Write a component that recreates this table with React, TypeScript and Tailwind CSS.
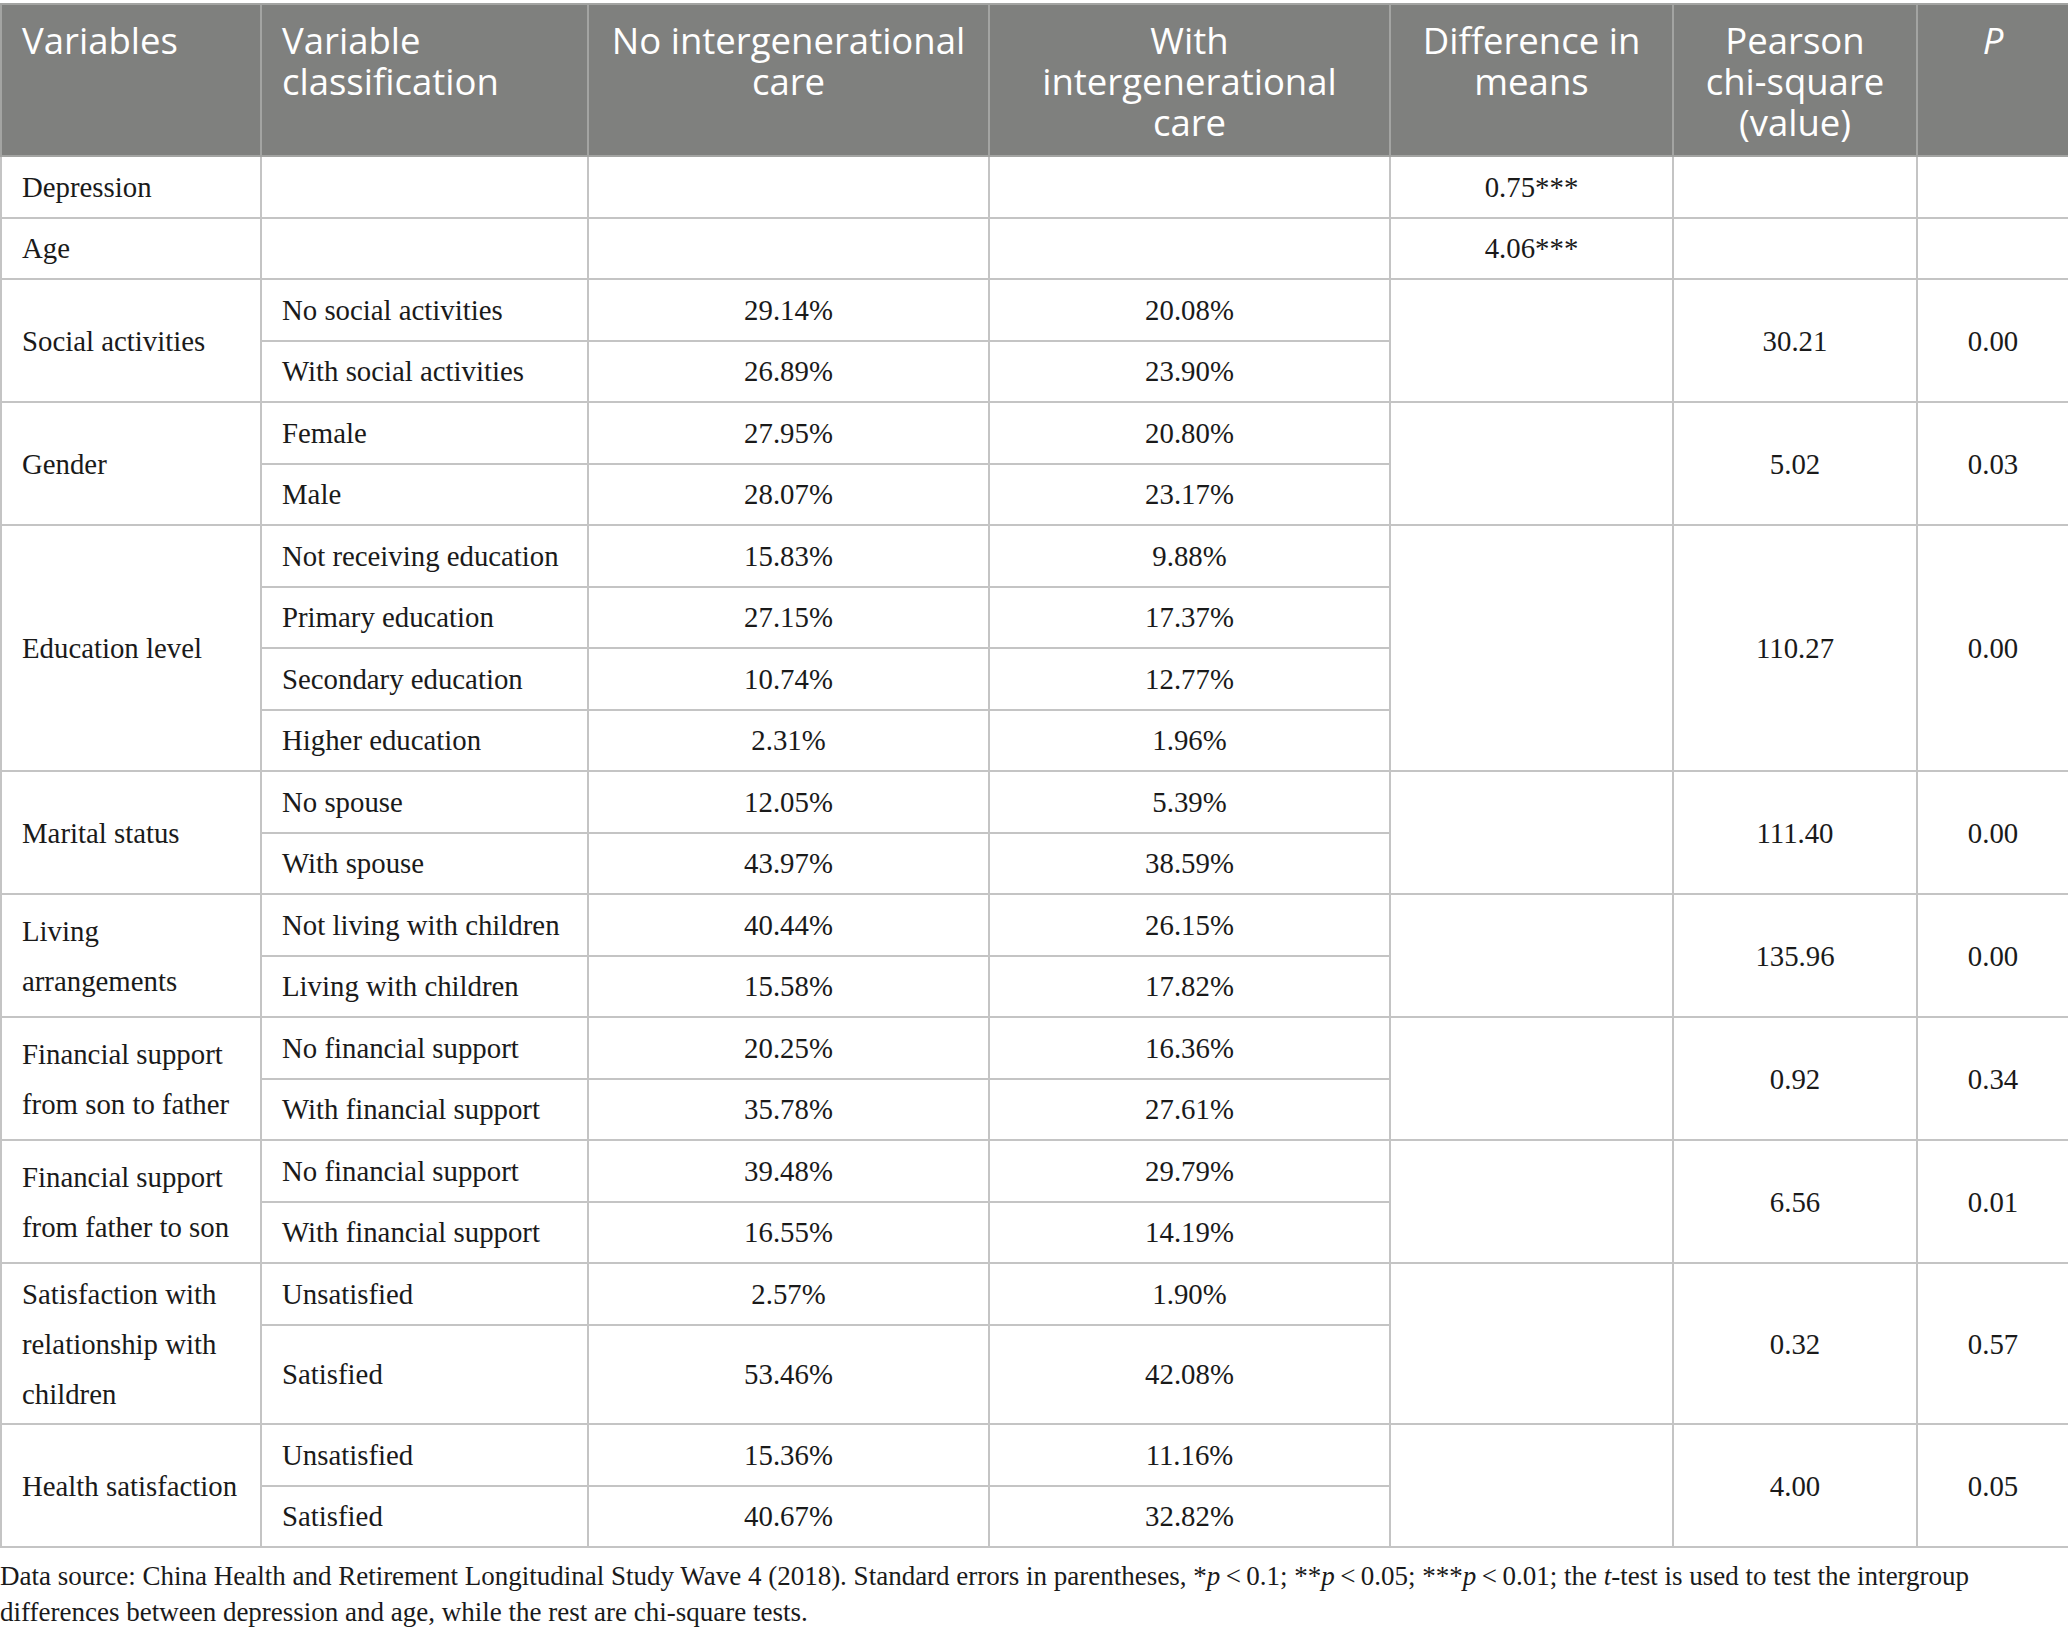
import React from "react";

type Sub = { label: string; a: string; b: string; h?: string };
type Group = { name: React.ReactNode; subs: Sub[]; chi: string; p: string };

const serif = { fontFamily: '"Liberation Serif", "Times New Roman", serif' };

const groups: Group[] = [
  {
    name: "Social activities",
    subs: [
      { label: "No social activities", a: "29.14%", b: "20.08%" },
      { label: "With social activities", a: "26.89%", b: "23.90%" },
    ],
    chi: "30.21",
    p: "0.00",
  },
  {
    name: "Gender",
    subs: [
      { label: "Female", a: "27.95%", b: "20.80%" },
      { label: "Male", a: "28.07%", b: "23.17%" },
    ],
    chi: "5.02",
    p: "0.03",
  },
  {
    name: "Education level",
    subs: [
      { label: "Not receiving education", a: "15.83%", b: "9.88%" },
      { label: "Primary education", a: "27.15%", b: "17.37%" },
      { label: "Secondary education", a: "10.74%", b: "12.77%" },
      { label: "Higher education", a: "2.31%", b: "1.96%" },
    ],
    chi: "110.27",
    p: "0.00",
  },
  {
    name: "Marital status",
    subs: [
      { label: "No spouse", a: "12.05%", b: "5.39%" },
      { label: "With spouse", a: "43.97%", b: "38.59%" },
    ],
    chi: "111.40",
    p: "0.00",
  },
  {
    name: (
      <>
        Living
        <br />
        arrangements
      </>
    ),
    subs: [
      { label: "Not living with children", a: "40.44%", b: "26.15%" },
      { label: "Living with children", a: "15.58%", b: "17.82%" },
    ],
    chi: "135.96",
    p: "0.00",
  },
  {
    name: (
      <>
        Financial support
        <br />
        from son to father
      </>
    ),
    subs: [
      { label: "No financial support", a: "20.25%", b: "16.36%" },
      { label: "With financial support", a: "35.78%", b: "27.61%" },
    ],
    chi: "0.92",
    p: "0.34",
  },
  {
    name: (
      <>
        Financial support
        <br />
        from father to son
      </>
    ),
    subs: [
      { label: "No financial support", a: "39.48%", b: "29.79%" },
      { label: "With financial support", a: "16.55%", b: "14.19%" },
    ],
    chi: "6.56",
    p: "0.01",
  },
  {
    name: (
      <>
        Satisfaction with
        <br />
        relationship with
        <br />
        children
      </>
    ),
    subs: [
      { label: "Unsatisfied", a: "2.57%", b: "1.90%", h: "h-[61.5px]" },
      { label: "Satisfied", a: "53.46%", b: "42.08%", h: "h-[99.5px]" },
    ],
    chi: "0.32",
    p: "0.57",
  },
  {
    name: "Health satisfaction",
    subs: [
      { label: "Unsatisfied", a: "15.36%", b: "11.16%" },
      { label: "Satisfied", a: "40.67%", b: "32.82%" },
    ],
    chi: "4.00",
    p: "0.05",
  },
];

const td = "border-2 border-[#c4c4c4] px-[20px] py-[3px] align-middle";
const th =
  "border-2 border-[#a3a4a2] bg-[#7f807e] px-[20px] pt-[15px] pb-[12px] align-top font-normal text-white";

export default function App() {
  return (
    <div className="w-[2068px] bg-white pt-[3px]">
      <table
        className="w-[2068px] table-fixed border-collapse text-[28.8px] leading-[50px] text-[#1a1a1a]"
        style={serif}
      >
        <colgroup>
          <col className="w-[260px]" />
          <col className="w-[327px]" />
          <col className="w-[401px]" />
          <col className="w-[401px]" />
          <col className="w-[283px]" />
          <col className="w-[244px]" />
          <col className="w-[152px]" />
        </colgroup>
        <thead>
          <tr
            className="text-[36.5px] leading-[41px]"
            style={{ fontFamily: '"Open Sans", "Noto Sans", sans-serif' }}
          >
            <th className={`${th} text-left`}>Variables</th>
            <th className={`${th} text-left`}>
              Variable
              <br />
              classification
            </th>
            <th className={`${th} text-center`}>
              No intergenerational
              <br />
              care
            </th>
            <th className={`${th} text-center`}>
              With
              <br />
              intergenerational
              <br />
              care
            </th>
            <th className={`${th} text-center`}>
              Difference in
              <br />
              means
            </th>
            <th className={`${th} text-center`}>
              Pearson
              <br />
              chi-square
              <br />
              (value)
            </th>
            <th className={`${th} text-center`}>
              <i>P</i>
            </th>
          </tr>
        </thead>
        <tbody>
          <tr className="h-[61.5px]">
            <td className={td}>Depression</td>
            <td className={td}></td>
            <td className={td}></td>
            <td className={td}></td>
            <td className={`${td} text-center`}>0.75***</td>
            <td className={td}></td>
            <td className={td}></td>
          </tr>
          <tr className="h-[61.5px]">
            <td className={td}>Age</td>
            <td className={td}></td>
            <td className={td}></td>
            <td className={td}></td>
            <td className={`${td} text-center`}>4.06***</td>
            <td className={td}></td>
            <td className={td}></td>
          </tr>
          {groups.map((g, gi) =>
            g.subs.map((s, si) => (
              <tr key={`${gi}-${si}`} className={s.h ?? "h-[61.5px]"}>
                {si === 0 && (
                  <td className={td} rowSpan={g.subs.length}>
                    {g.name}
                  </td>
                )}
                <td className={td}>{s.label}</td>
                <td className={`${td} text-center`}>{s.a}</td>
                <td className={`${td} text-center`}>{s.b}</td>
                {si === 0 && (
                  <>
                    <td className={td} rowSpan={g.subs.length}></td>
                    <td className={`${td} text-center`} rowSpan={g.subs.length}>
                      {g.chi}
                    </td>
                    <td className={`${td} text-center`} rowSpan={g.subs.length}>
                      {g.p}
                    </td>
                  </>
                )}
              </tr>
            ))
          )}
        </tbody>
      </table>
      <p
        className="mt-[10px] text-[27px] leading-[36px] text-[#1a1a1a]"
        style={serif}
      >
        Data source: China Health and Retirement Longitudinal Study Wave 4 (2018). Standard errors in
        parentheses, *<i>p</i>&thinsp;&lt;&thinsp;0.1; **<i>p</i>&thinsp;&lt;&thinsp;0.05; ***
        <i>p</i>&thinsp;&lt;&thinsp;0.01; the <i>t</i>-test is used to test the intergroup
        <br />
        differences between depression and age, while the rest are chi-square tests.
      </p>
    </div>
  );
}
